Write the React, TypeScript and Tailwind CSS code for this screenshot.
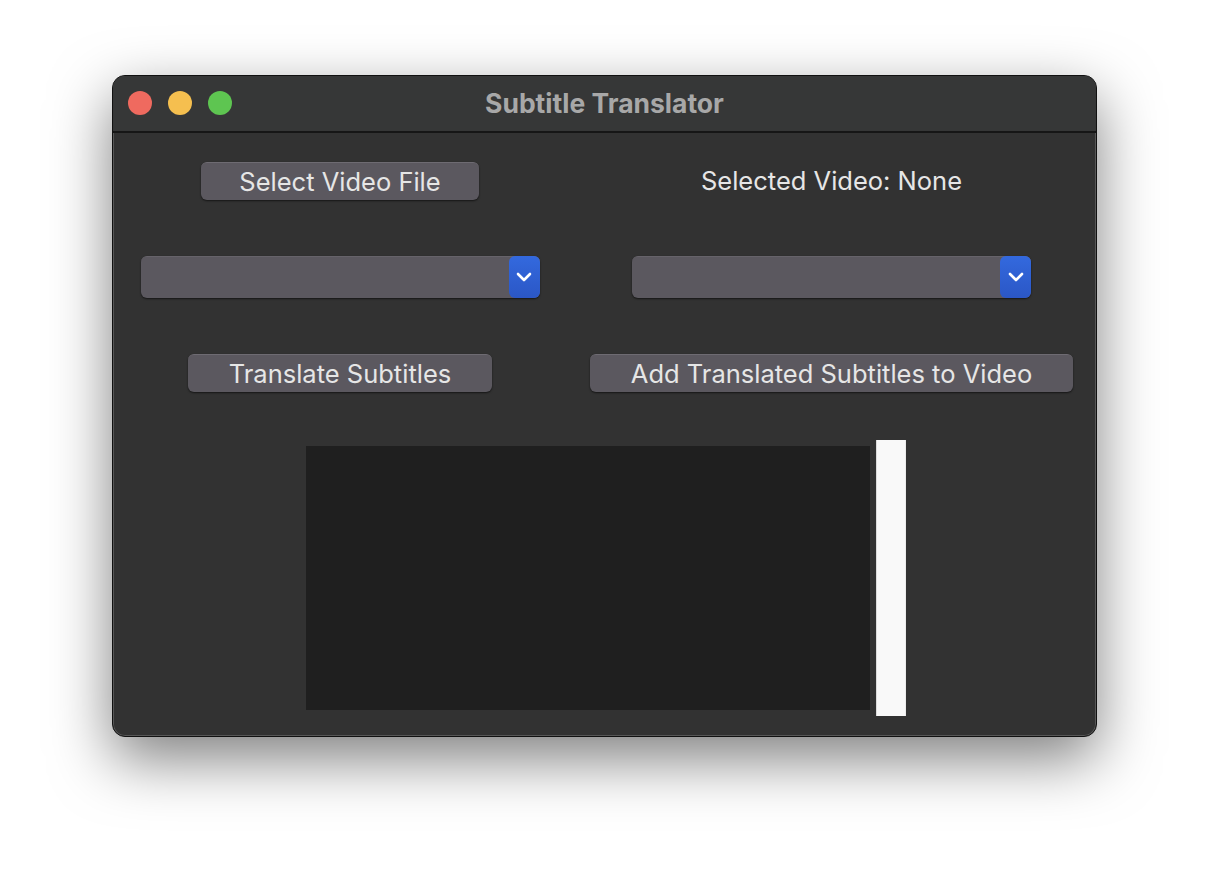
import React from 'react'

const font = { fontFamily: 'Inter, "Noto Sans", "Liberation Sans", sans-serif' }

function Button({ label, width }: { label: string; width: string }) {
  return (
    <button
      className={`${width} h-[38px] rounded-[6px] bg-[#5b585f] text-[#e6e6e6] text-[25.5px] leading-none border-t border-[#6e6b72] shadow-[0_1px_2px_rgba(0,0,0,0.6)]`}
      style={font}
    >
      {label}
    </button>
  )
}

function Dropdown() {
  return (
    <div className="flex h-[42px] w-[399px] rounded-[6px] bg-[#5b585f] shadow-[0_1px_2px_rgba(0,0,0,0.6)] border-t border-[#66636a]">
      <div className="flex-1" />
      <div className="flex w-[31px] items-center justify-center rounded-[6px] bg-gradient-to-b from-[#3369de] to-[#2b57c6] -mt-px">
        <svg width="16" height="10" viewBox="0 0 16 10" fill="none">
          <path d="M2 2l6 6 6-6" stroke="white" strokeWidth="2.6" strokeLinecap="round" strokeLinejoin="round" />
        </svg>
      </div>
    </div>
  )
}

export default function App() {
  return (
    <div className="h-[884px] w-full bg-white pl-[112px] pt-[75px]">
      {/* window */}
      <div className="flex h-[662px] w-[985px] flex-col overflow-hidden rounded-[13px] border border-[#111] bg-[#323232] shadow-[0_22px_60px_rgba(0,0,0,0.5),inset_0_0_0_1px_rgba(255,255,255,0.18)]">
        {/* title bar */}
        <div className="relative flex h-[57px] shrink-0 items-center justify-center border-b-2 border-[#161616] bg-[#363737]">
          <div className="absolute left-[15px] top-[15px] flex gap-[16px]">
            <div className="h-[24px] w-[24px] rounded-full bg-[#ef6a5f]" />
            <div className="h-[24px] w-[24px] rounded-full bg-[#f5bf4f]" />
            <div className="h-[24px] w-[24px] rounded-full bg-[#5ec551]" />
          </div>
          <span className="text-[26.5px] font-bold text-[#a8a8a8]" style={font}>
            Subtitle Translator
          </span>
        </div>

        {/* controls */}
        <div className="grid grid-cols-[454px_1fr] grid-rows-[96px_96px_96px]">
          <div className="flex items-center justify-center">
            <Button label="Select Video File" width="w-[278px]" />
          </div>
          <div className="flex items-center justify-center">
            <span className="text-[25.5px] text-[#e6e6e6]" style={font}>
              Selected Video: None
            </span>
          </div>
          <div className="flex items-center justify-center">
            <Dropdown />
          </div>
          <div className="flex items-center justify-center">
            <Dropdown />
          </div>
          <div className="flex items-center justify-center">
            <Button label="Translate Subtitles" width="w-[304px]" />
          </div>
          <div className="flex items-center justify-center">
            <Button label="Add Translated Subtitles to Video" width="w-[483px]" />
          </div>
        </div>

        {/* text area + scrollbar */}
        <div className="ml-[187px] mt-[19px] flex h-[276px]">
          <div className="w-[576px] p-[6px]">
            <div className="h-full w-full bg-[#1f1f1f]" />
          </div>
          <div className="w-[30px] border-l border-[#dcdcdc] border-r border-r-[#ececec] bg-[#f9f9f9]" />
        </div>
      </div>
    </div>
  )
}
